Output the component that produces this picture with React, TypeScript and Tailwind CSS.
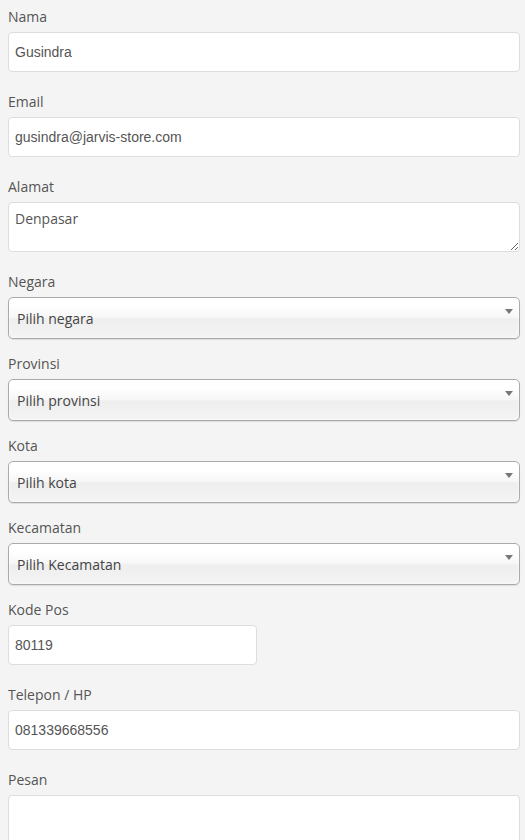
import React from "react";

const label = "block text-[14px] leading-5 mb-[5px] text-[#555] font-['Open_Sans',sans-serif]";
const input =
  "block w-full h-10 px-[6px] bg-white border border-[#ddd] rounded-[4px] text-[14px] text-[#555] font-['Liberation_Sans',Arial,sans-serif] outline-none";
const area =
  "block w-full px-[6px] py-[6px] bg-white border border-[#ddd] rounded-[4px] text-[14px] leading-5 text-[#555] font-['Open_Sans',sans-serif] outline-none resize-y";

const Select = ({ text }: { text: string }) => (
  <div className="relative h-[42px] rounded-[5px] border border-[#aaa] bg-[linear-gradient(#fff_20%,#f6f6f6_50%,#eee_52%,#f4f4f4_100%)] shadow-[inset_0_0_3px_#fff,0_1px_1px_rgba(0,0,0,0.1)] pl-2 flex items-center">
    <span className="text-[14px] text-[#444] font-['Open_Sans',sans-serif] mt-px">{text}</span>
    <span className="absolute right-[6px] top-[11px] w-0 h-0 border-l-[4px] border-r-[4px] border-t-[5px] border-l-transparent border-r-transparent border-t-[#777]" />
  </div>
);

const App = () => {
  return (
    <div className="min-h-[840px] bg-[#f4f4f4] px-2 pt-[7px] pr-[5px]">
      <div className="mb-5">
        <label className={label}>Nama</label>
        <input className={input} defaultValue="Gusindra" />
      </div>
      <div className="mb-5">
        <label className={label}>Email</label>
        <input className={input} defaultValue="gusindra@jarvis-store.com" />
      </div>
      <div className="mb-5">
        <label className={label}>Alamat</label>
        <textarea className={`${area} h-[50px]`} defaultValue="Denpasar" />
      </div>
      <div className="mb-[15px]">
        <label className={label}>Negara</label>
        <Select text="Pilih negara" />
      </div>
      <div className="mb-[15px]">
        <label className={label}>Provinsi</label>
        <Select text="Pilih provinsi" />
      </div>
      <div className="mb-[15px]">
        <label className={label}>Kota</label>
        <Select text="Pilih kota" />
      </div>
      <div className="mb-[15px]">
        <label className={label}>Kecamatan</label>
        <Select text="Pilih Kecamatan" />
      </div>
      <div className="mb-5">
        <label className={label}>Kode Pos</label>
        <input className={`${input} !w-[249px]`} defaultValue="80119" />
      </div>
      <div className="mb-5">
        <label className={label}>Telepon / HP</label>
        <input className={input} defaultValue="081339668556" />
      </div>
      <div className="mb-5">
        <label className={label}>Pesan</label>
        <textarea className={`${area} h-[80px]`} />
      </div>
    </div>
  );
};

export default App;
